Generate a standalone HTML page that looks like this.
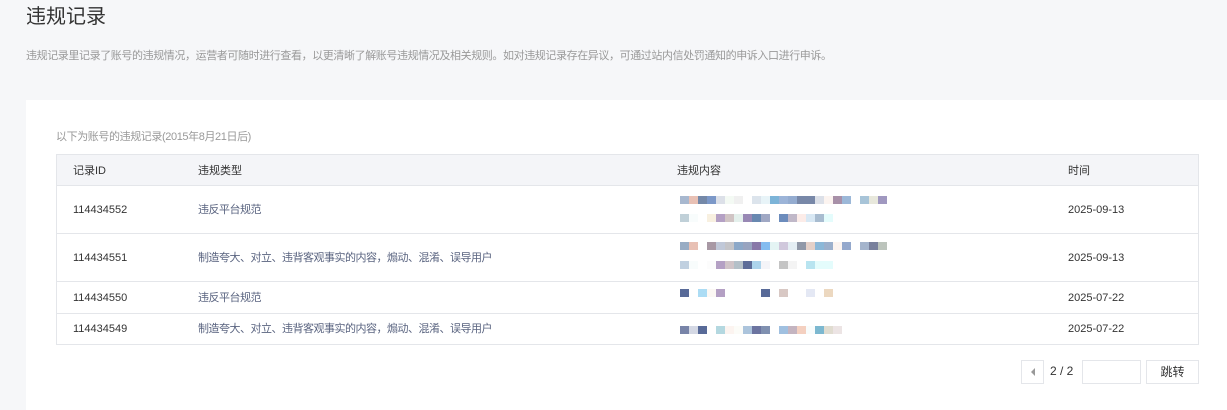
<!DOCTYPE html>
<html><head><meta charset="utf-8"><style>
*{margin:0;padding:0;box-sizing:border-box}
body{width:1227px;height:410px;overflow:hidden;background:#f6f7f9;font-family:"Liberation Sans","Noto Sans CJK SC",sans-serif;position:relative}
.t{position:absolute;left:26px;top:3px;font-size:20px;line-height:28px;color:#333}
.d{position:absolute;left:26px;top:49px;font-size:11px;line-height:14px;letter-spacing:-0.4px;color:#999}
.card{position:absolute;left:26px;top:100px;right:0;bottom:0;background:#fff}
.n{position:absolute;left:56px;top:130px;font-size:11px;line-height:14px;letter-spacing:-0.4px;color:#999}
.tb{position:absolute;left:56px;top:154px;width:1143px;height:191px;border:1px solid #e4e6ea}
.h{position:absolute;left:0;top:0;right:0;height:31px;background:#f4f5f8;border-bottom:1px solid #e4e6ea}
.c{position:absolute;font-size:11px;line-height:14px;color:#333}
.ty{color:#5a6480;letter-spacing:-0.5px}
.line{position:absolute;left:0;right:0;height:1px;background:#e4e6ea}
.m{position:absolute;display:flex;height:8px}
.m i{display:block;width:9px;height:8px}
.pg{position:absolute;top:360px;height:24px;border:1px solid #e4e6ea;background:#fff;font-size:12px;color:#333;text-align:center;line-height:22px}
</style></head><body>
<div class="t">违规记录</div>
<div class="d">违规记录里记录了账号的违规情况，运营者可随时进行查看，以更清晰了解账号违规情况及相关规则。如对违规记录存在异议，可通过站内信处罚通知的申诉入口进行申诉。</div>
<div class="card"></div>
<div class="n">以下为账号的违规记录(2015年8月21日后)</div>
<div class="tb">
<div class="h"></div>
<div class="c" style="left:16px;top:9px">记录ID</div>
<div class="c" style="left:141px;top:9px">违规类型</div>
<div class="c" style="left:620px;top:9px">违规内容</div>
<div class="c" style="left:1011px;top:9px">时间</div>
<div class="line" style="top:78px"></div>
<div class="line" style="top:126px"></div>
<div class="line" style="top:158px"></div>
<div class="c" style="left:16px;top:48px">114434552</div>
<div class="c ty" style="left:141px;top:48px">违反平台规范</div>
<div class="c" style="left:1011px;top:48px">2025-09-13</div>
<div class="c" style="left:16px;top:96px">114434551</div>
<div class="c ty" style="left:141px;top:96px">制造夸大、对立、违背客观事实的内容，煽动、混淆、误导用户</div>
<div class="c" style="left:1011px;top:96px">2025-09-13</div>
<div class="c" style="left:16px;top:136px">114434550</div>
<div class="c ty" style="left:141px;top:136px">违反平台规范</div>
<div class="c" style="left:1011px;top:136px">2025-07-22</div>
<div class="c" style="left:16px;top:167px">114434549</div>
<div class="c ty" style="left:141px;top:167px">制造夸大、对立、违背客观事实的内容，煽动、混淆、误导用户</div>
<div class="c" style="left:1011px;top:167px">2025-07-22</div>
</div>
<div class="m" style="left:680px;top:196px"><i style="background:#a8b8cf"></i><i style="background:#e8c0b4"></i><i style="background:#7488a8"></i><i style="background:#7c98c8"></i><i style="background:#dce0e8"></i><i style="background:#f4faf4"></i><i style="background:#f0f0f0"></i><i></i><i style="background:#dce4ec"></i><i style="background:#e8f4f8"></i><i style="background:#7cb4d8"></i><i style="background:#9cb4d8"></i><i style="background:#94acd0"></i><i style="background:#7888a8"></i><i style="background:#7888a8"></i><i style="background:#dce0e8"></i><i style="background:#fcf4f0"></i><i style="background:#a890a8"></i><i style="background:#9cb8d8"></i><i></i><i style="background:#a8c4d8"></i><i style="background:#e8e8dc"></i><i style="background:#a098c0"></i></div>
<div class="m" style="left:680px;top:214px"><i style="background:#c0d0d8"></i><i style="background:#f8fcfc"></i><i></i><i style="background:#f8f0e0"></i><i style="background:#b4a0c4"></i><i style="background:#d0c4c4"></i><i style="background:#e4f0ec"></i><i style="background:#9888b4"></i><i style="background:#6888b0"></i><i style="background:#a0a8c4"></i><i></i><i style="background:#6c8cbc"></i><i style="background:#c0b8c8"></i><i style="background:#fcece8"></i><i style="background:#d8e8f4"></i><i style="background:#a8bcd0"></i><i style="background:#e4fcfc"></i></div>
<div class="m" style="left:680px;top:242px"><i style="background:#98acc4"></i><i style="background:#e8c0b4"></i><i></i><i style="background:#a898a4"></i><i style="background:#c0c8d8"></i><i style="background:#c4c4c8"></i><i style="background:#8ca8c8"></i><i style="background:#98a4c0"></i><i style="background:#8878a8"></i><i style="background:#84bcf0"></i><i style="background:#e4f4f4"></i><i style="background:#d0c8dc"></i><i style="background:#e4eef4"></i><i style="background:#9098a8"></i><i style="background:#e4d0c8"></i><i style="background:#8cb8d8"></i><i style="background:#9cb0cc"></i><i style="background:#fcf4f0"></i><i style="background:#94a8cc"></i><i></i><i style="background:#a4b4cc"></i><i style="background:#78809c"></i><i style="background:#bcc4bc"></i></div>
<div class="m" style="left:680px;top:261px"><i style="background:#c0d0e0"></i><i style="background:#f8fcfc"></i><i></i><i style="background:#fcfcfc"></i><i style="background:#b4a0c4"></i><i style="background:#d0c4c8"></i><i style="background:#b4c0c8"></i><i style="background:#5c6c98"></i><i style="background:#acd4ec"></i><i style="background:#f4f4f8"></i><i></i><i style="background:#c4c4c4"></i><i style="background:#f4f4f4"></i><i></i><i style="background:#b8e4f0"></i><i style="background:#e4fcfc"></i><i style="background:#e4fcfc"></i></div>
<div class="m" style="left:680px;top:289px"><i style="background:#586a98"></i><i></i><i style="background:#acdcf4"></i><i style="background:#fcf8f4"></i><i style="background:#b4a0c4"></i><i></i><i></i><i></i><i></i><i style="background:#586a98"></i><i></i><i style="background:#d8c8c4"></i><i></i><i></i><i style="background:#e4e8f4"></i><i></i><i style="background:#ecd8c0"></i></div>
<div class="m" style="left:680px;top:326px"><i style="background:#7884a8"></i><i style="background:#d4d8e4"></i><i style="background:#586a98"></i><i></i><i style="background:#b4d8e0"></i><i style="background:#fcf4f0"></i><i style="background:#fcfcf8"></i><i style="background:#acc4dc"></i><i style="background:#6c74a0"></i><i style="background:#8090b0"></i><i></i><i style="background:#a0c0e0"></i><i style="background:#c4b4c0"></i><i style="background:#f4d0c0"></i><i style="background:#f8fcfc"></i><i style="background:#7cb8d0"></i><i style="background:#e0dcd0"></i><i style="background:#ece4e4"></i></div>
<div class="pg" style="left:1021px;width:23px"><span style="display:inline-block;width:0;height:0;border-top:4px solid transparent;border-bottom:4px solid transparent;border-right:4px solid #999;vertical-align:middle;margin-top:-2px"></span></div>
<div style="position:absolute;left:1050px;top:364px;font-size:12px;color:#333">2 / 2</div>
<div class="pg" style="left:1082px;width:59px"></div>
<div class="pg" style="left:1146px;width:53px">跳转</div>
</body></html>
